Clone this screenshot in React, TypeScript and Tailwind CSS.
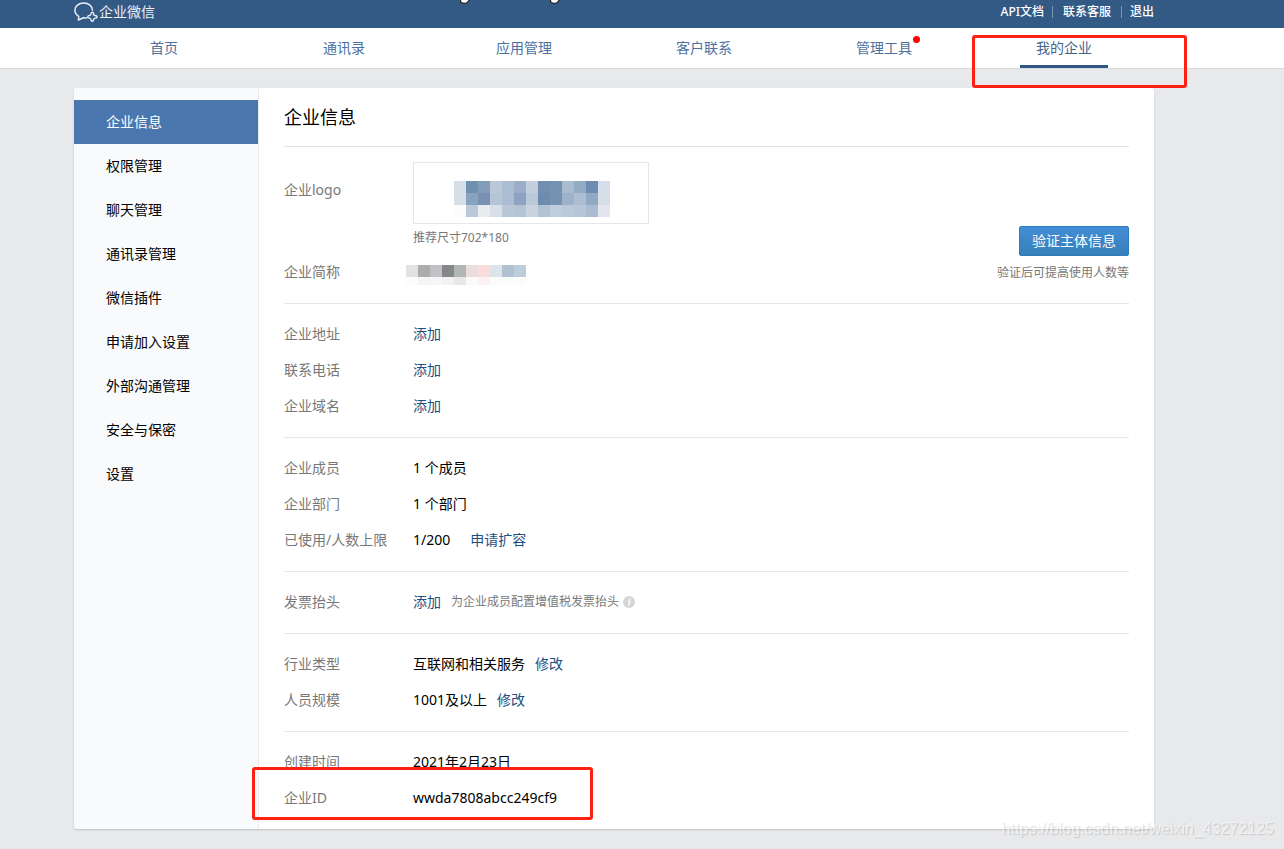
/**
 * 企业微信管理后台 - 我的企业 / 企业信息
 */
import type { ReactNode } from 'react';

const TABS = ['首页', '通讯录', '应用管理', '客户联系', '管理工具', '我的企业'];

const MENU = [
  '企业信息',
  '权限管理',
  '聊天管理',
  '通讯录管理',
  '微信插件',
  '申请加入设置',
  '外部沟通管理',
  '安全与保密',
  '设置',
];

const CELL = 12;

// Logo 打码色块，每行 13 格
const LOGO_MOSAIC = [
  ['#d6dfe8', '#6f90b1', '#839db9', '#bac7d9', '#abbdd2', '#9aaec8', '#c4cfde', '#718fb2', '#7592b3', '#aabcd0', '#93abc4', '#6c8cb2', '#d6dfe9'],
  ['#d6dfe8', '#88a3be', '#7891b5', '#b4c5d6', '#abbdd2', '#8da2c1', '#bbc9da', '#6e8cae', '#7592b3', '#9db2c9', '#adbdd2', '#92a9c3', '#d6dee8'],
  ['#fafbfd', '#bac8d9', '#e6ecf0', '#d7e0e9', '#b9c7d8', '#b3c4d5', '#cad4e1', '#b2c2d5', '#c0cddc', '#bbc8d9', '#b7c5d8', '#acbcd0', '#e1e6ee'],
];

const NAME_MOSAIC = [
  ['#e2e2e1', '#adacab', '#c3c1c5', '#868789', '#b0b6b2', '#ebdddd', '#fbdcdd', '#dde5eb', '#b1c1d2', '#becddb'],
  ['#fcfcfc', '#f5f5f5', '#f6f6f7', '#f2f2f2', '#e8e8e9', '#fafafa', '#fdf2f3', '#fcfcfd', '#fafbfc', '#fbfcfd'],
];

function Mosaic({ rows, label, height }: { rows: string[][]; label: string; height: number }) {
  const width = rows[0].length * CELL;
  return (
    <svg role="img" aria-label={label} width={width} height={height} shapeRendering="crispEdges">
      {rows.map((row, y) =>
        row.map((color, x) => (
          <rect key={`${x}-${y}`} x={x * CELL} y={y * CELL} width={CELL} height={CELL} fill={color} />
        )),
      )}
    </svg>
  );
}

function BrandIcon() {
  return (
    <svg width="24" height="20" viewBox="0 0 24 20" fill="none" stroke="#e9eff6" strokeWidth="1.5" strokeLinejoin="round">
      <path d="M13.600 15.600c-1.300.4-2.700.5-4.200.2L4.400 18l.3-3.600C2.300 12.800.9 10.700.9 8.300c0-4 3.900-7.200 8.800-7.200s8.800 3.200 8.800 7.200v.4" />
      <path
        strokeWidth="1.400"
        d="M18.200 10.200c.9 0 1.500.8 1.300 1.700-.1.900.5 1.600 1.400 1.600 1.200 0 2.100.6 2.100 1.400s-.8 1.300-1.700 1.200c-.9 0-1.500.6-1.600 1.500-.1 1-.7 1.700-1.400 1.700-.9 0-1.400-.8-1.300-1.600 0-.9-.6-1.500-1.500-1.600-1-.1-1.700-.6-1.700-1.400s.8-1.300 1.700-1.200c.9 0 1.400-.6 1.500-1.500 0-1 .5-1.800 1.200-1.800z"
      />
    </svg>
  );
}

// 顶部两个只露出末端的弯钩
function TopHooks() {
  return (
    <svg width="112" height="5" viewBox="0 0 112 5" aria-hidden="true" className="absolute top-0 left-[459px]">
      {[0, 90].map((x) => (
        <g key={x} transform={`translate(${x} 0)`}>
          <path d="M1 0v2.500Q4.500 5 8 3.200Q10 2 11 0z" fill="#222" />
          <path d="M2.200 0v1.800Q5 3.600 7.500 2.200Q8.800 1.400 9.500 0z" fill="#fff" />
        </g>
      ))}
    </svg>
  );
}

function InfoIcon() {
  return (
    <svg width="12" height="12" viewBox="0 0 12 12" className="ml-1">
      <circle cx="6" cy="6" r="6" fill="#d5d5d5" />
      <circle cx="6.700" cy="3.100" r=".9" fill="#fff" />
      <path d="M5 5.200h1.600L5.700 9h1" fill="none" stroke="#fff" strokeWidth="1.200" />
    </svg>
  );
}

function Link({ children }: { children: ReactNode }) {
  return (
    <a href="#" className="text-[#1d4f82] hover:underline">
      {children}
    </a>
  );
}

function Section({ children }: { children: ReactNode }) {
  return <dl className="border-b border-[#e4e6e9] pt-3 pb-[13px] last:border-b-0">{children}</dl>;
}

function Row({ label, marked, children }: { label: string; marked?: boolean; children: ReactNode }) {
  return (
    <div className="relative flex h-9 items-center">
      <dt className="w-[129px] shrink-0 text-[#787878]">{label}</dt>
      <dd className="flex items-center text-black">{children}</dd>
      {marked && (
        <span className="pointer-events-none absolute -top-[13px] -left-8 h-[53px] w-[341px] rounded-[3px] border-3 border-[#ff2014]" />
      )}
    </div>
  );
}

export default function App() {
  return (
    <div className="relative min-h-screen overflow-hidden bg-[#e8e9eb] pb-5 font-['Noto_Sans','Noto_Sans_CJK_SC',sans-serif] text-sm">
      <header className="relative flex h-7 items-center justify-between bg-[#335985] pr-[130px] pb-1 pl-[74px] text-white">
        <a href="#" className="flex items-center gap-px text-[#e9eff6]">
          <BrandIcon />
          企业微信
        </a>
        <TopHooks />
        <div className="flex items-center text-xs font-medium">
          <a href="#">API文档</a>
          <span className="mr-2.5 ml-2 h-3 w-px bg-[#7f96b1]" />
          <a href="#">联系客服</a>
          <span className="mr-2 ml-2.5 h-3 w-px bg-[#7f96b1]" />
          <a href="#">退出</a>
        </div>
      </header>

      <nav className="flex h-[41px] border-b border-[#d8d9db] bg-white pr-[130px] pl-[74px]">
        {TABS.map((tab) => (
          <div key={tab} className="relative flex flex-1 justify-center">
            <a
              href="#"
              className={
                tab === '我的企业'
                  ? 'h-10 w-[88px] border-b-3 border-[#2f5785] text-center leading-10 text-[#3f668f]'
                  : 'relative h-10 leading-10 text-[#4c71a0]'
              }
            >
              {tab}
              {tab === '管理工具' && (
                <span className="absolute top-2 -right-2 size-[7px] rounded-full bg-[#ff0000]" />
              )}
            </a>
            {tab === '我的企业' && (
              <span className="pointer-events-none absolute top-[7px] -left-0.5 z-10 h-[53px] w-[215px] rounded-[3px] border-3 border-[#ff2014]" />
            )}
          </div>
        ))}
      </nav>

      <div className="mt-[19px] pr-[130px] pl-[74px]">
        <div className="flex rounded-[3px] bg-white shadow-[0_1px_2px_rgba(0,0,0,0.18)]">
          <aside className="w-[185px] shrink-0 rounded-l-[3px] border-r border-dotted border-[#d3dae2] bg-[#f9fafc] pt-3">
            {MENU.map((item, i) => (
              <a
                key={item}
                href="#"
                className={
                  i === 0
                    ? 'block h-11 bg-[#4a78ae] pl-8 leading-11 text-white'
                    : 'block h-11 pl-8 leading-11 text-black'
                }
              >
                {item}
              </a>
            ))}
          </aside>

          <main className="flex-1 px-[25px]">
            <h1 className="border-b border-[#dfe3e8] text-lg leading-[58px] text-black">企业信息</h1>

            <div className="flex items-end justify-between border-b border-[#e4e6e9] pt-[15px] pb-[13px]">
              <dl>
                <div className="flex h-[92px]">
                  <dt className="w-[129px] leading-14 text-[#787878]">企业logo</dt>
                  <dd>
                    <div className="flex h-[62px] w-[236px] items-center justify-center border border-[#e4e6e9] pt-3 pl-0.5">
                      <Mosaic rows={LOGO_MOSAIC} label="企业logo" height={36} />
                    </div>
                    <p className="text-xs leading-7 text-[#787878]">推荐尺寸702*180</p>
                  </dd>
                </div>
                <div className="flex h-9 items-center">
                  <dt className="w-[122px] text-[#787878]">企业简称</dt>
                  <dd className="self-end pb-[5px]">
                    <Mosaic rows={NAME_MOSAIC} label="企业简称" height={20} />
                  </dd>
                </div>
              </dl>
              <div className="flex flex-col items-end">
                <button
                  type="button"
                  className="h-[30px] w-[110px] rounded-[2px] border border-[#2b7cbf] bg-linear-to-b from-[#438dd6] to-[#367fb9] text-white"
                >
                  验证主体信息
                </button>
                <p className="text-xs leading-[34px] text-[#787878]">验证后可提高使用人数等</p>
              </div>
            </div>

            <Section>
              <Row label="企业地址"><Link>添加</Link></Row>
              <Row label="联系电话"><Link>添加</Link></Row>
              <Row label="企业域名"><Link>添加</Link></Row>
            </Section>

            <Section>
              <Row label="企业成员">1 个成员</Row>
              <Row label="企业部门">1 个部门</Row>
              <Row label="已使用/人数上限">
                <span className="mr-5">1/200</span>
                <Link>申请扩容</Link>
              </Row>
            </Section>

            <Section>
              <Row label="发票抬头">
                <Link>添加</Link>
                <span className="ml-2.5 text-xs text-[#787878]">为企业成员配置增值税发票抬头</span>
                <InfoIcon />
              </Row>
            </Section>

            <Section>
              <Row label="行业类型">
                <span className="mr-2.5">互联网和相关服务</span>
                <Link>修改</Link>
              </Row>
              <Row label="人员规模">
                <span className="mr-2.5">1001及以上</span>
                <Link>修改</Link>
              </Row>
            </Section>

            <Section>
              <Row label="创建时间">2021年2月23日</Row>
              <Row label="企业ID" marked>wwda7808abcc249cf9</Row>
            </Section>
          </main>
        </div>
      </div>

      <span className="pointer-events-none absolute right-2.5 bottom-2 font-['Liberation_Sans',sans-serif] text-base text-white/60 [text-shadow:1px_1px_1px_rgba(0,0,0,0.15)]">
        https://blog.csdn.net/weixin_43272125
      </span>
    </div>
  );
}
